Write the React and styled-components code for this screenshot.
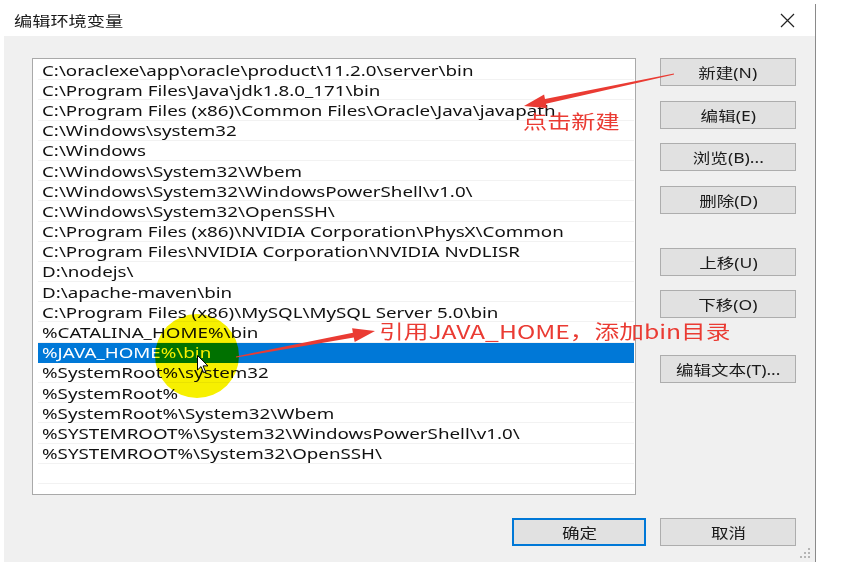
import React from "react";
import styled, { createGlobalStyle } from "styled-components";

const GlobalStyle = createGlobalStyle`
  html, body { margin: 0; padding: 0; background: #ffffff; }
  body { font-family: "Noto Sans", "Noto Sans CJK SC", sans-serif; }
  * { box-sizing: border-box; }
`;

const CJK = `"Noto Sans", "Noto Sans CJK SC", sans-serif`;

const Page = styled.div`
  position: relative;
  width: 844px;
  height: 577px;
  overflow: hidden;
  background: #ffffff;
`;

const Dialog = styled.div`
  position: relative;
  margin: 4px 0 0 4px;
  width: 812px;
  height: 558px;
  background: #f0f0f0;
  border-right: 1px solid #8a8a8a;
  display: flex;
  flex-direction: column;
`;

const TitleBar = styled.div`
  height: 32px;
  background: #ffffff;
  display: flex;
  align-items: center;
  justify-content: space-between;
  padding: 0 20px 0 10px;
`;

const Stretch = styled.span`
  display: inline-block;
  white-space: nowrap;
  transform: scaleX(${(p) => p.$sx || 1.28});
  transform-origin: ${(p) => (p.$center ? "center" : "left")} center;
`;

const Title = styled.div`
  font-family: ${CJK};
  font-size: 14px;
  color: #1a1a1a;
`;

const Close = styled.div`
  width: 15px;
  height: 15px;
  display: flex;
  align-items: center;
  justify-content: center;
`;

const Body = styled.div`
  display: grid;
  grid-template-columns: 604px 136px;
  column-gap: 24px;
  padding: 22px 0 0 28px;
`;

const List = styled.div`
  height: 437px;
  background: #ffffff;
  border: 1px solid #a9a9a9;
  padding: 1px 1px 0 5px;
  display: flex;
  flex-direction: column;
  overflow: hidden;
`;

const Row = styled.div`
  height: 20.2px;
  flex: 0 0 20.2px;
  display: flex;
  align-items: center;
  padding-left: 4px;
  font-family: "Noto Sans", sans-serif;
  font-size: 15px;
  white-space: nowrap;
  color: ${(p) => (p.$selected ? "#ffffff" : "#111111")};
  background: ${(p) => (p.$selected ? "#0078d7" : "transparent")};
  border-bottom: 1px solid ${(p) => (p.$selected ? "#0078d7" : "#f2f2f2")};
`;

const Buttons = styled.div`
  display: flex;
  flex-direction: column;
`;

const Button = styled.div`
  margin-top: ${(p) => p.$gap || 0}px;
  width: ${(p) => p.$w || 136}px;
  height: 28px;
  display: flex;
  align-items: center;
  justify-content: center;
  background: #e1e1e1;
  border: ${(p) => (p.$primary ? "2px solid #0078d7" : "1px solid #adadad")};
  font-family: ${CJK};
  font-size: 13.5px;
  color: #1a1a1a;
`;

const Footer = styled.div`
  display: flex;
  justify-content: flex-end;
  align-items: center;
  gap: 14px;
  padding: 23px 19px 0 0;
`;

const Grip = styled.svg`
  position: absolute;
  right: 4px;
  bottom: 3px;
`;

const Overlay = styled.svg`
  position: absolute;
  left: 0;
  top: 0;
  pointer-events: none;
`;

const Spot = styled.div`
  position: absolute;
  left: ${(p) => p.$x - p.$r}px;
  top: ${(p) => p.$y - p.$r}px;
  width: ${(p) => p.$r * 2}px;
  height: ${(p) => p.$r * 2}px;
  border-radius: 50%;
  background: #f7f000;
  mix-blend-mode: multiply;
  filter: blur(0.6px);
`;

const Note = styled.div`
  position: absolute;
  left: ${(p) => p.$x}px;
  top: ${(p) => p.$y}px;
  font-family: "Noto Sans CJK SC", sans-serif;
  font-size: ${(p) => p.$size}px;
  line-height: 1;
  color: #ea3b33;
  white-space: nowrap;
  transform: scaleX(${(p) => p.$sx || 1});
  transform-origin: left center;
`;

const Cursor = styled.svg`
  position: absolute;
  left: 197px;
  top: 355px;
`;

const rows = [
  "C:\\oraclexe\\app\\oracle\\product\\11.2.0\\server\\bin",
  "C:\\Program Files\\Java\\jdk1.8.0_171\\bin",
  "C:\\Program Files (x86)\\Common Files\\Oracle\\Java\\javapath",
  "C:\\Windows\\system32",
  "C:\\Windows",
  "C:\\Windows\\System32\\Wbem",
  "C:\\Windows\\System32\\WindowsPowerShell\\v1.0\\",
  "C:\\Windows\\System32\\OpenSSH\\",
  "C:\\Program Files (x86)\\NVIDIA Corporation\\PhysX\\Common",
  "C:\\Program Files\\NVIDIA Corporation\\NVIDIA NvDLISR",
  "D:\\nodejs\\",
  "D:\\apache-maven\\bin",
  "C:\\Program Files (x86)\\MySQL\\MySQL Server 5.0\\bin",
  "%CATALINA_HOME%\\bin",
  "%JAVA_HOME%\\bin",
  "%SystemRoot%\\system32",
  "%SystemRoot%",
  "%SystemRoot%\\System32\\Wbem",
  "%SYSTEMROOT%\\System32\\WindowsPowerShell\\v1.0\\",
  "%SYSTEMROOT%\\System32\\OpenSSH\\",
  "",
];

function arrowPoints(x1, y1, x2, y2, head = 22, hw = 7, w0 = 0.6, w1 = 2.4) {
  const dx = x2 - x1;
  const dy = y2 - y1;
  const len = Math.hypot(dx, dy);
  const ux = dx / len;
  const uy = dy / len;
  const nx = -uy;
  const ny = ux;
  const bx = x2 - ux * head;
  const by = y2 - uy * head;
  const pts = [
    [x1 + nx * w0, y1 + ny * w0],
    [bx + nx * w1, by + ny * w1],
    [bx + nx * hw, by + ny * hw],
    [x2, y2],
    [bx - nx * hw, by - ny * hw],
    [bx - nx * w1, by - ny * w1],
    [x1 - nx * w0, y1 - ny * w0],
  ];
  return pts.map((p) => p.map((v) => v.toFixed(1)).join(",")).join(" ");
}

const BtnLabel = ({ children }) => (
  <Stretch $center $sx={1.3}>
    {children}
  </Stretch>
);

export default function App() {
  return (
    <Page>
      <GlobalStyle />
      <Dialog>
        <TitleBar>
          <Title>
            <Stretch $sx={1.3}>编辑环境变量</Stretch>
          </Title>
          <Close>
            <svg width="15" height="15" viewBox="0 0 15 15">
              <path d="M1 1 L14 14 M14 1 L1 14" stroke="#222" strokeWidth="1.2" />
            </svg>
          </Close>
        </TitleBar>
        <Body>
          <List>
            {rows.map((r, i) => (
              <Row key={i} $selected={i === 14}>
                <Stretch $sx={1.25}>{r}</Stretch>
              </Row>
            ))}
          </List>
          <Buttons>
            <Button><BtnLabel>新建(N)</BtnLabel></Button>
            <Button $gap={14.5}><BtnLabel>编辑(E)</BtnLabel></Button>
            <Button $gap={14.5}><BtnLabel>浏览(B)...</BtnLabel></Button>
            <Button $gap={14.5}><BtnLabel>删除(D)</BtnLabel></Button>
            <Button $gap={34}><BtnLabel>上移(U)</BtnLabel></Button>
            <Button $gap={14}><BtnLabel>下移(O)</BtnLabel></Button>
            <Button $gap={37}><BtnLabel>编辑文本(T)...</BtnLabel></Button>
          </Buttons>
        </Body>
        <Footer>
          <Button $primary $w={134}><BtnLabel>确定</BtnLabel></Button>
          <Button $w={136}><BtnLabel>取消</BtnLabel></Button>
        </Footer>
        <Grip width="12" height="12" viewBox="0 0 12 12">
          <g fill="#b5b5b5">
            <rect x="9" y="1" width="2" height="2" />
            <rect x="5" y="5" width="2" height="2" />
            <rect x="9" y="5" width="2" height="2" />
            <rect x="1" y="9" width="2" height="2" />
            <rect x="5" y="9" width="2" height="2" />
            <rect x="9" y="9" width="2" height="2" />
          </g>
        </Grip>
      </Dialog>

      <Spot $x={197} $y={356} $r={42} />

      <Overlay width="844" height="577" viewBox="0 0 844 577">
        <polygon points={arrowPoints(674, 74, 524, 106)} fill="#ea3b33" />
        <polygon points={arrowPoints(236, 357, 375, 331)} fill="#ea3b33" />
      </Overlay>

      <Note $x={523} $y={111} $size={19} $sx={1.27}>点击新建</Note>
      <Note $x={379} $y={321} $size={19} $sx={1.3}>引用JAVA_HOME，添加bin目录</Note>

      <Cursor width="12" height="19" viewBox="0 0 12 19">
        <path
          d="M0.5 0.5 L0.5 15 L4 11.6 L6.6 17.6 L8.6 16.8 L6.1 10.9 L11 10.9 Z"
          fill="#ffffff"
          stroke="#000000"
          strokeWidth="1"
          strokeLinejoin="round"
        />
      </Cursor>
    </Page>
  );
}
